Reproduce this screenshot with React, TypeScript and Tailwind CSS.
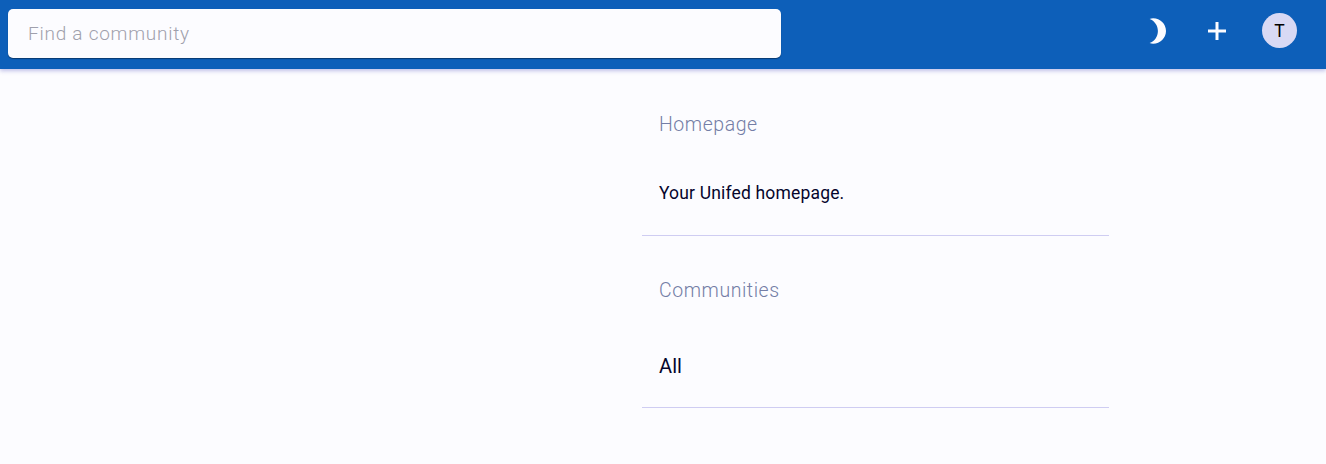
const Moon = () => (
  <svg width="18" height="26" viewBox="0 0 18 26" fill="#fcfcff">
    <path d="M.6.9C1.700.5 2.900.3 4.200.3 11.200.3 17 6 17 13S11.200 25.700 4.200 25.700c-1.300 0-2.500-.2-3.600-.6C5.600 23.300 8.900 18.600 8.900 13S5.600 2.700.6.9z" />
  </svg>
);

const Plus = () => (
  <svg width="18" height="18" viewBox="0 0 18 18" fill="#fcfcff">
    <path d="M7.500 0h3v7.500H18v3h-7.500V18h-3v-7.500H0v-3h7.500z" />
  </svg>
);

function Section({ title, text, className, textClass }: { title: string; text: string; className: string; textClass: string }) {
  return (
    <section className={`flex flex-col border-b border-[#cfcdf2] pl-[17px] ${className}`}>
      <h2 className="pt-px text-[19.5px] leading-6 font-light tracking-[0.55px] text-[#747ea6]">{title}</h2>
      <p className={textClass}>{text}</p>
    </section>
  );
}

export default function App() {
  return (
    <div className="min-h-screen bg-[#fcfcff] font-['Roboto',sans-serif]">
      <header className="flex h-[69px] items-start bg-[#0d5fb9] pt-[9px] pr-[29px] pl-2 shadow-[0_2px_4px_rgba(60,60,180,0.3)]">
        <input
          placeholder="Find a community"
          className="h-[49px] w-[773px] rounded-[5px] bg-[#fcfcff] px-5 text-[19px] font-light tracking-[0.75px] shadow-[0_1px_1px_rgba(0,0,0,0.4)] outline-none placeholder:text-[#a0a0ac]"
        />
        <div className="mt-1 ml-auto flex h-[35px] items-center">
          <button className="mr-[41px]" aria-label="Theme"><Moon /></button>
          <button className="mr-9" aria-label="Add"><Plus /></button>
          <span className="flex size-[35px] items-center justify-center rounded-full bg-[#d8d9f4] pt-px text-[17.5px] text-black">T</span>
        </div>
      </header>
      <main className="ml-[642px] w-[467px] pt-[43px]">
        <Section
          title="Homepage"
          text="Your Unifed homepage."
          className="h-[124px]"
          textClass="mt-11 text-[17.5px] leading-6 tracking-[0.17px] text-[#05052c]"
        />
        <Section
          title="Communities"
          text="All"
          className="mt-[42px] h-[130px]"
          textClass="mt-[51px] text-xl leading-6 tracking-[0.1px] text-[#05052c]"
        />
      </main>
    </div>
  );
}
